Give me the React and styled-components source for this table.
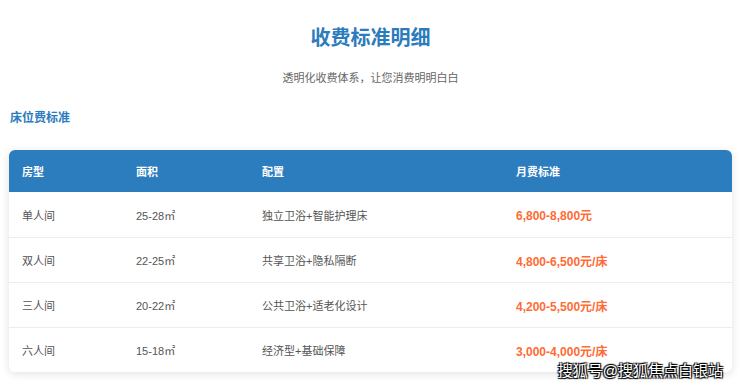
import React from "react";
import styled, { createGlobalStyle } from "styled-components";

const Global = createGlobalStyle`
  body {
    margin: 0;
    background: #fff;
    font-family: "Liberation Sans", "Noto Sans CJK SC", sans-serif;
  }
`;

const Page = styled.div`
  position: relative;
  width: 740px;
  height: 387px;
  overflow: hidden;
  padding: 0 8px 0 9px;
  box-sizing: border-box;
`;

const Title = styled.h1`
  margin: 25px 0 0;
  font-size: 20px;
  line-height: 26px;
  font-weight: 700;
  color: #2b7bbd;
  text-align: center;
`;

const Subtitle = styled.p`
  margin: 19px 0 0;
  font-size: 11px;
  line-height: 16px;
  color: #666;
  text-align: center;
`;

const Heading = styled.h2`
  margin: 23px 0 0 1px;
  font-size: 12px;
  line-height: 18px;
  font-weight: 700;
  color: #2b7bbd;
`;

const Card = styled.div`
  margin-top: 23px;
  border-radius: 6px;
  overflow: hidden;
  background: #fff;
  box-shadow: 0 2px 8px rgba(0, 0, 0, 0.12);
`;

const Row = styled.div`
  display: grid;
  grid-template-columns: 114px 126px 254px 1fr;
  align-items: center;
  height: ${p => (p.head ? "42px" : "45px")};
  background: ${p => (p.head ? "#2c7dbe" : "#fff")};
  border-top: ${p => (p.head || p.first ? "none" : "1px solid #ececec")};
  box-sizing: border-box;
`;

const Cell = styled.div`
  padding-left: 13px;
  color: ${p => (p.head ? "#fff" : p.price ? "#ff6b35" : "#555")};
  font-weight: ${p => (p.head || p.price ? 700 : 400)};
  font-size: ${p => (p.price ? "12px" : "11px")};
`;

const Watermark = styled.div`
  position: absolute;
  right: 17px;
  bottom: 8px;
  font-size: 15px;
  line-height: 16px;
  color: #fff;
  text-shadow: 1px 1px 1px #000, -1px -1px 1px #000, 1px -1px 1px #000,
    -1px 1px 1px #000;
`;

const rows = [
  ["单人间", "25-28㎡", "独立卫浴+智能护理床", "6,800-8,800元"],
  ["双人间", "22-25㎡", "共享卫浴+隐私隔断", "4,800-6,500元/床"],
  ["三人间", "20-22㎡", "公共卫浴+适老化设计", "4,200-5,500元/床"],
  ["六人间", "15-18㎡", "经济型+基础保障", "3,000-4,000元/床"]
];

export default function App() {
  return (
    <Page>
      <Global />
      <Title>收费标准明细</Title>
      <Subtitle>透明化收费体系，让您消费明明白白</Subtitle>
      <Heading>床位费标准</Heading>
      <Card>
        <Row head>
          <Cell head>房型</Cell>
          <Cell head>面积</Cell>
          <Cell head>配置</Cell>
          <Cell head>月费标准</Cell>
        </Row>
        {rows.map((r, i) => (
          <Row key={r[0]} first={i === 0}>
            <Cell>{r[0]}</Cell>
            <Cell>{r[1]}</Cell>
            <Cell>{r[2]}</Cell>
            <Cell price>{r[3]}</Cell>
          </Row>
        ))}
      </Card>
      <Watermark>搜狐号@搜狐焦点白银站</Watermark>
    </Page>
  );
}
